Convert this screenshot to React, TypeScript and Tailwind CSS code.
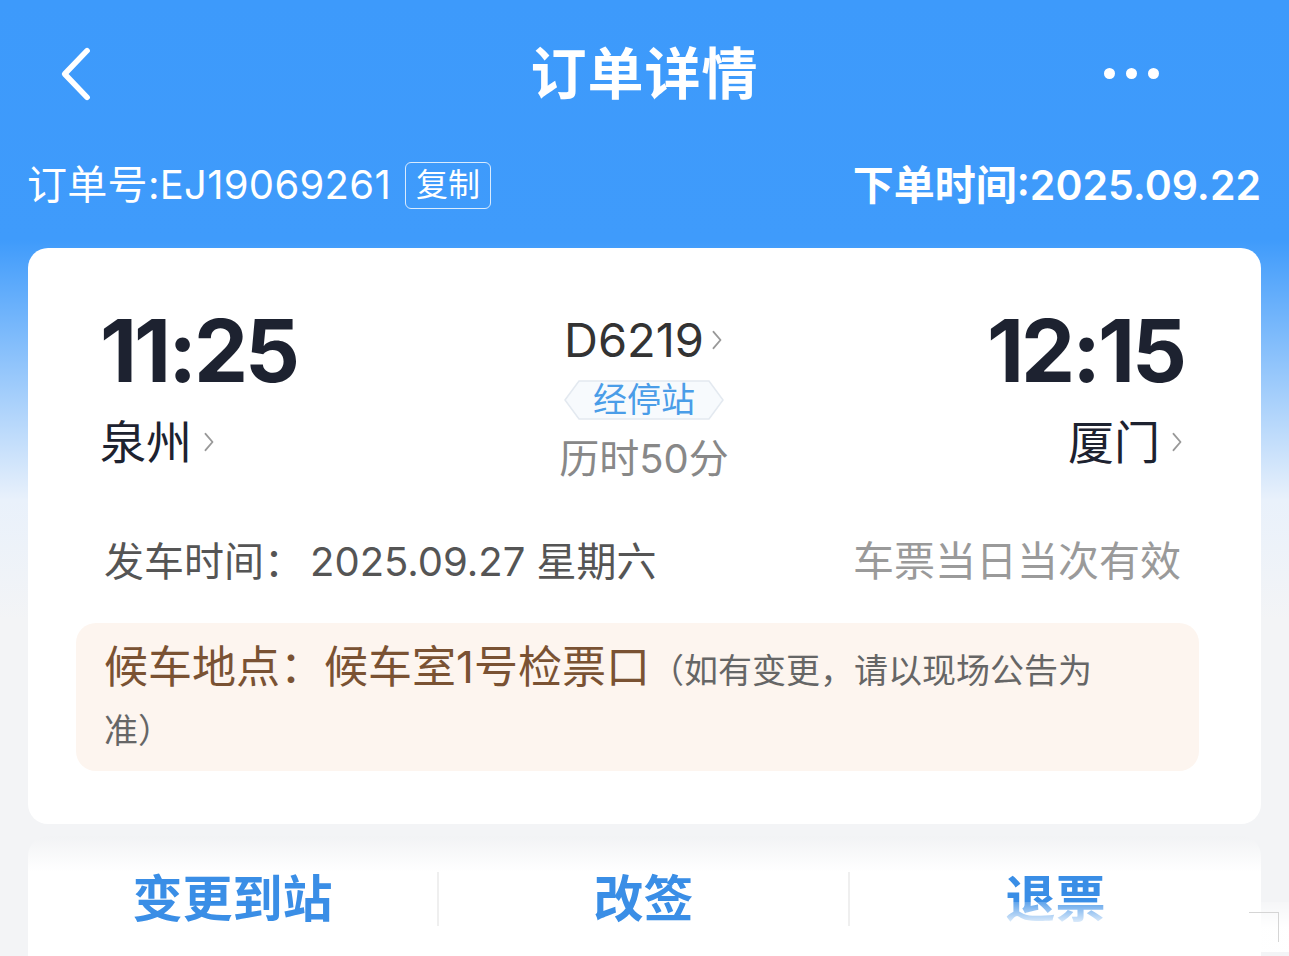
import React from 'react'

const font = { fontFamily: 'Inter, "Noto Sans CJK SC", sans-serif' }

function Chevron({ className }: { className?: string }) {
  return (
    <svg viewBox="0 0 12 24" className={className} fill="none">
      <path d="M3 5l6 7-6 7" stroke="currentColor" strokeWidth="1.6" strokeLinecap="round" strokeLinejoin="round" />
    </svg>
  )
}

function StopBadge() {
  return (
    <div className="relative mt-[16px] flex h-[42px] w-[162px] items-center justify-center">
      <svg viewBox="0 0 162 42" className="absolute inset-0 h-full w-full">
        <polygon
          points="2,21 16,2 146,2 160,21 146,40 16,40"
          fill="#f7fafd"
          stroke="#e3e9f0"
          strokeWidth="1.5"
        />
      </svg>
      <span className="relative text-[34px] leading-none text-[#4a9de8]">经停站</span>
    </div>
  )
}

export default function App() {
  return (
    <div
      style={font}
      className="relative h-[956px] w-[1289px] overflow-hidden bg-[linear-gradient(180deg,#3d9afb_0px,#3f9bfb_240px,#e9f1fb_500px,#f3f4f6_620px,#f3f4f6_100%)]"
    >
      {/* header */}
      <div className="relative flex h-[150px] items-center justify-center">
        <svg viewBox="0 0 40 60" className="absolute left-[54px] top-[46px] h-[56px] w-[40px]" fill="none">
          <path d="M34 5L10 30l24 25" stroke="white" strokeWidth="6" strokeLinecap="round" strokeLinejoin="round" />
        </svg>
        <h1 className="-mt-[2px] text-[56px] font-bold tracking-[1px] text-white">订单详情</h1>
        <div className="absolute left-[1104px] top-[68px] flex gap-[11px]">
          <span className="h-[11px] w-[11px] rounded-full bg-white" />
          <span className="h-[11px] w-[11px] rounded-full bg-white" />
          <span className="h-[11px] w-[11px] rounded-full bg-white" />
        </div>
      </div>

      {/* order row */}
      <div className="flex h-[72px] items-center justify-between pl-[27px] pr-[28px] pb-[2px] text-white">
        <div className="flex items-center">
          <span className="text-[40px] leading-none tracking-[0.3px]">订单号:EJ19069261</span>
          <span className="ml-[14px] flex h-[47px] w-[86px] items-center justify-center rounded-[6px] border-[1.5px] border-white/80 text-[32px] leading-none">
            复制
          </span>
        </div>
        <span className="text-[41px] font-semibold leading-none">下单时间:2025.09.22</span>
      </div>

      {/* ticket card */}
      <div className="mx-[28px] mt-[26px] rounded-[20px] bg-white pb-[53px] pl-[48px] pr-[62px] pt-[60px]">
        <div className="flex items-start justify-between pl-[24px] pr-[15px]">
          <div className="flex w-[260px] flex-col">
            <span className="text-[86px] font-bold leading-none tracking-[-3px] text-[#1d2230]">11:25</span>
            <div className="mt-[25px] flex items-center text-[46px] leading-none text-[#1d2230]">
              泉州
              <Chevron className="ml-[10px] h-[30px] w-[14px] text-[#999]" />
            </div>
          </div>
          <div className="flex flex-col items-center pl-[4px]">
            <div className="mt-[8px] flex items-center text-[47px] leading-none text-[#333]">
              D6219
              <Chevron className="ml-[6px] h-[30px] w-[14px] text-[#999]" />
            </div>
            <StopBadge />
            <span className="mt-[18px] text-[40px] leading-none text-[#888]">历时50分</span>
          </div>
          <div className="flex w-[260px] flex-col items-end">
            <span className="text-[86px] font-bold leading-none tracking-[-3px] text-[#1d2230]">12:15</span>
            <div className="mt-[25px] flex items-center text-[46px] leading-none text-[#1d2230]">
              厦门
              <Chevron className="ml-[10px] h-[30px] w-[14px] text-[#999]" />
            </div>
          </div>
        </div>

        <div className="mt-[62px] flex items-center justify-between pl-[28px] pr-[18px] text-[40px] leading-none">
          <span className="text-[#555]">
            发车时间：<span className="ml-[6px]">2025.09.27 星期六</span>
          </span>
          <span className="text-[41px] text-[#9a9a9a]">车票当日当次有效</span>
        </div>

        <div className="mt-[41px] rounded-[20px] bg-[#fdf5ef] pb-[14px] pl-[28px] pt-[14px]">
          <p className="w-[1010px] text-[44px] leading-[60px] text-[#7a5233]">
            候车地点：候车室1号检票口
            <span className="text-[34px] leading-none text-[#666]">（如有变更，请以现场公告为准）</span>
          </p>
        </div>
      </div>

      {/* actions card */}
      <div className="relative mx-[28px] mt-[12px] h-[140px] rounded-t-[20px] bg-[linear-gradient(180deg,#f2f3f5_0px,#ffffff_36px)]">
        <div className="grid grid-cols-3 pt-[36px]">
          <div className="flex h-[54px] items-center justify-center border-r-[2px] border-[#efefef] text-[50px] font-bold leading-none text-[#3a8ee6]">
            变更到站
          </div>
          <div className="flex h-[54px] items-center justify-center border-r-[2px] border-[#efefef] text-[50px] font-bold leading-none text-[#3a8ee6]">
            改签
          </div>
          <div className="flex h-[54px] items-center justify-center text-[50px] font-bold leading-none text-[#3a8ee6]">
            退票
          </div>
        </div>
        <div className="absolute left-[975px] top-[66px] h-[50px] w-[286px] bg-[linear-gradient(180deg,rgba(255,255,255,0.2),rgba(255,255,255,0.97)_50%)]">
          <div className="absolute right-[10px] top-[10px] h-[30px] w-[30px] border-r border-t border-[#d5d5d5]" />
        </div>
      </div>
    </div>
  )
}
